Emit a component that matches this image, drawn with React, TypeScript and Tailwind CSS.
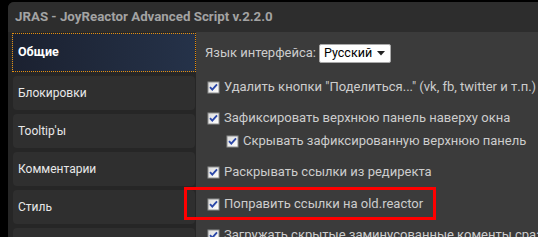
import React from "react";

const tabs = ["Общие", "Блокировки", "Tooltip'ы", "Комментарии", "Стиль", "Прочее"];

const Check = () => (
  <svg width="13" height="13" viewBox="0 0 13 13" className="shrink-0">
    <defs>
      <linearGradient id="cbg" x1="0" y1="0" x2="1" y2="1">
        <stop offset="0" stopColor="#dcdcdc" />
        <stop offset="1" stopColor="#ffffff" />
      </linearGradient>
    </defs>
    <rect x="0.5" y="0.5" width="12" height="12" fill="#8e8f8f" />
    <rect x="1.5" y="1.5" width="10" height="10" fill="url(#cbg)" />
    <path d="M3 6.2 L5.3 8.6 L10 3.4" fill="none" stroke="#2c48a8" strokeWidth="1.9" />
  </svg>
);

const Row = ({ text, mt, indent }: { text: string; mt: string; indent?: boolean }) => (
  <div className={`flex items-center h-[20px] gap-[4px] ${mt} ${indent ? "ml-[21px]" : "ml-[2px]"}`}>
    <Check />
    <span className="whitespace-nowrap">{text}</span>
  </div>
);

export default function App() {
  return (
    <div
      className="relative w-[538px] h-[237px] overflow-hidden bg-black pl-[8px] pt-[2px]"
      style={{ fontFamily: 'Roboto, "Noto Sans", sans-serif' }}
    >
      <div className="flex flex-col h-[260px] bg-[#262626] rounded-tl-[6px] overflow-hidden">
        <div className="h-[30px] shrink-0 bg-[#2d2d2d] flex items-center pl-[7px] text-[13.3px] font-bold text-[#a3a3a3] whitespace-nowrap">
          JRAS - JoyReactor Advanced Script v.2.2.0
        </div>
        <div className="flex flex-1">
          <div className="w-[188px] shrink-0 pl-[4px] pt-[1px] flex flex-col gap-[4px]">
            {tabs.map((t, i) =>
              i === 0 ? (
                <div
                  key={t}
                  className="h-[39px] flex items-center pl-[5px] border border-dotted border-[#e8900c] bg-gradient-to-r from-[#1b2130] to-[#253249] text-white font-bold text-[12.5px]"
                >
                  {t}
                </div>
              ) : (
                <div
                  key={t}
                  className="h-[34px] ml-[1px] mr-[1px] flex items-center pl-[5px] rounded-[4px] bg-[#2f2f2f] text-[#e8e8e8] text-[12px]"
                >
                  {t}
                </div>
              )
            )}
          </div>
          <div className="flex-1 bg-[#3b3b3b] pl-[9px] text-[13px] text-[#cdcdcd] flex flex-col">
            <div className="flex items-center h-[20px] mt-[11px] gap-[3px] whitespace-nowrap">
              <span>Язык интерфейса:</span>
              <div className="h-[19px] bg-white border border-[#a9a9a9] rounded-[2px] flex items-center gap-[5px] pl-[4px] pr-[5px] text-black text-[12.5px]">
                <span>Русский</span>
                <svg width="8" height="5" viewBox="0 0 8 5">
                  <path d="M0 0 H8 L4 4.5 Z" fill="#222" />
                </svg>
              </div>
            </div>
            <Row mt="mt-[14px]" text={'Удалить кнопки "Поделиться..." (vk, fb, twitter и т.п.)'} />
            <Row mt="mt-[11px]" text="Зафиксировать верхнюю панель наверху окна" />
            <Row mt="mt-[3px]" indent text="Скрывать зафиксированную верхнюю панель" />
            <Row mt="mt-[11px]" text="Раскрывать ссылки из редиректа" />
            <Row mt="mt-[12px]" text="Поправить ссылки на old.reactor" />
            <Row mt="mt-[11px]" text="Загружать скрытые заминусованные коменты сразу" />
          </div>
        </div>
      </div>
      <div className="absolute left-[184px] top-[187px] w-[252px] h-[33px] border-[3px] border-[#ff0000]" />
    </div>
  );
}
